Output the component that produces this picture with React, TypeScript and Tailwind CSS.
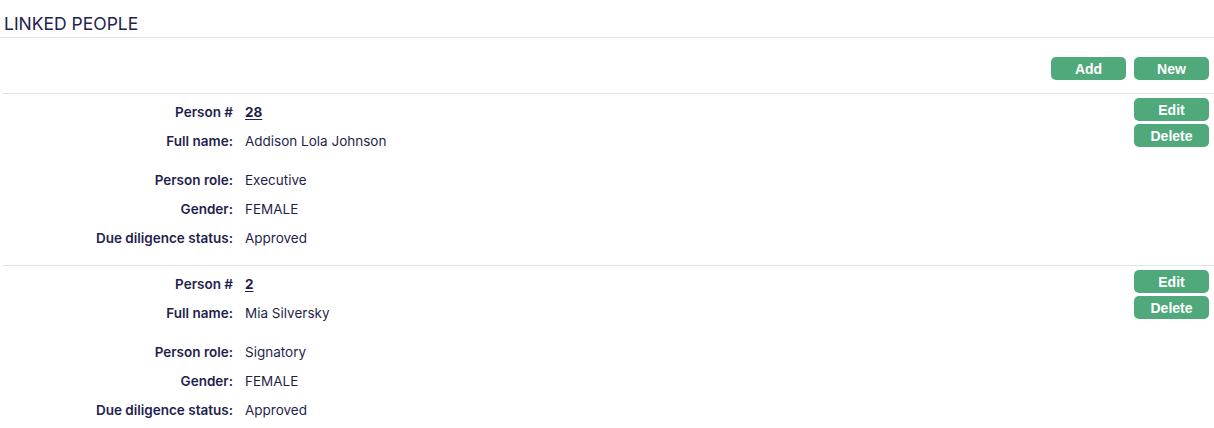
const people = [
  { id: 28, name: 'Addison Lola Johnson', role: 'Executive', gender: 'FEMALE', dd: 'Approved' },
  { id: 2, name: 'Mia Silversky', role: 'Signatory', gender: 'FEMALE', dd: 'Approved' },
]

const btn =
  'w-[75px] h-[23px] rounded-[5px] bg-[#4fa97b] text-white text-[14px] font-bold leading-none font-["Liberation_Sans",Arial,sans-serif] flex items-center justify-center'

export default function App() {
  return (
    <div className="bg-white min-h-screen pr-[5px] font-['Inter',sans-serif] text-[#1f1f4d]">
      {/* Header */}
      <div className="h-[38px] border-b border-[#e2e2e2] pl-[4px] pt-[12px] -mr-[5px]">
        <h2 className="text-[17.5px] leading-[24px] font-normal text-[#23234f]">LINKED PEOPLE</h2>
      </div>

      {/* Toolbar */}
      <div className="flex justify-end gap-[8px] pt-[19px] pb-[13px]">
        <button className={btn}>Add</button>
        <button className={btn}>New</button>
      </div>

      {/* Records */}
      <div className="ml-[3px] -mr-[5px]">
        {people.map(p => (
          <PersonRow key={p.id} person={p} />
        ))}
      </div>
    </div>
  )
}

// ── PersonRow ────────────────────────────────────────────────────────────────

function PersonRow({ person }: { person: typeof people[number] }) {
  return (
    <div className="border-t border-[#e2e2e2] pt-[4px] pb-[12px] flex pr-[5px]">
      <div className="flex-1">
        <Field label="Person #">
          <a href="#" className="font-bold underline underline-offset-2">{person.id}</a>
        </Field>
        <Field label="Full name:">{person.name}</Field>
        <div className="h-[10px]" />
        <Field label="Person role:">{person.role}</Field>
        <Field label="Gender:">{person.gender}</Field>
        <Field label="Due diligence status:">{person.dd}</Field>
      </div>
      <div className="flex flex-col gap-[3px]">
        <button className={btn}>Edit</button>
        <button className={btn}>Delete</button>
      </div>
    </div>
  )
}

function Field({ label, children }: { label: string; children: React.ReactNode }) {
  return (
    <div className="flex items-center h-[29px] text-[13.5px]">
      <div className="w-[242px] text-right font-semibold pr-[12px]">{label}</div>
      <div>{children}</div>
    </div>
  )
}
